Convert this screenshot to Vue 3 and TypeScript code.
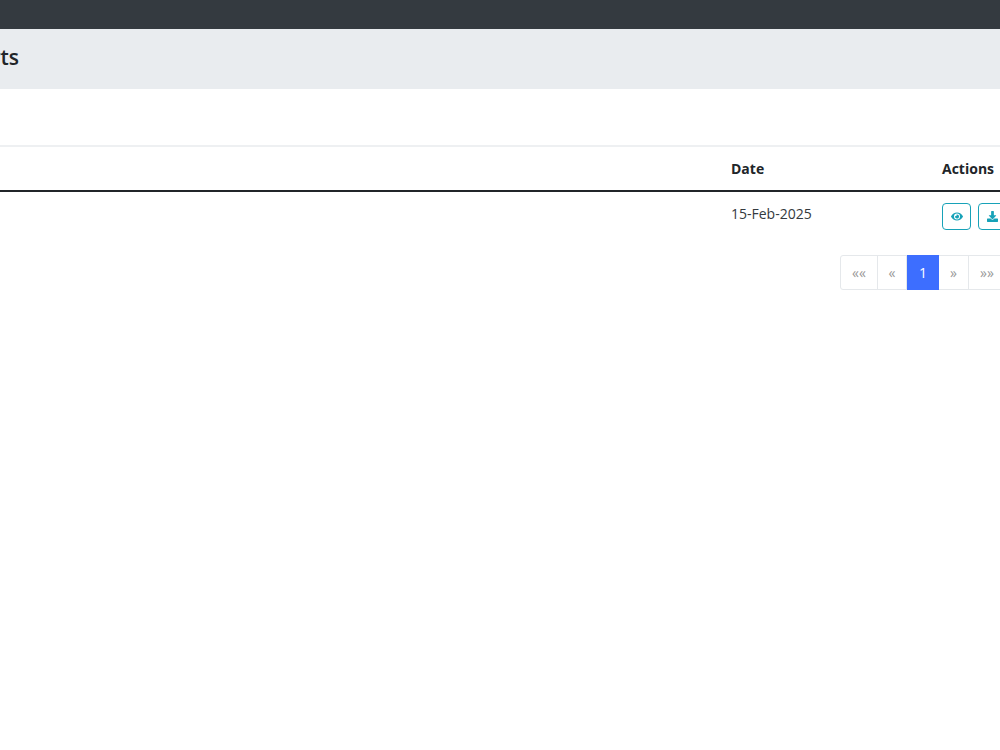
<script setup lang="ts">
const pages: { label: string; active?: boolean; width: number }[] = [
  { label: '««', width: 38 },
  { label: '«', width: 30 },
  { label: '1', active: true, width: 32 },
  { label: '»', width: 30 },
  { label: '»»', width: 38 },
]
</script>

<template>
  <div class="page">
    <div class="topbar"></div>
    <div class="titlebar"><h1 class="title">Reports</h1></div>
    <div class="content">
      <div class="row head">
        <div class="c-date">Date</div>
        <div class="c-act">Actions</div>
      </div>
      <div class="row body">
        <div class="c-date date-text">15-Feb-2025</div>
        <div class="c-act btns">
          <button class="btn" aria-label="View">
            <svg class="eye" viewBox="0 0 576 512"><path fill="currentColor" d="M572.52 241.4C518.29 135.59 410.93 64 288 64S57.68 135.64 3.48 241.41a32.35 32.35 0 0 0 0 29.19C57.71 376.41 165.07 448 288 448s230.32-71.64 284.52-177.41a32.35 32.35 0 0 0 0-29.19zM288 400a144 144 0 1 1 144-144 143.93 143.93 0 0 1-144 144zm0-240a95.31 95.31 0 0 0-25.31 3.79 47.85 47.85 0 0 1-66.9 66.9A95.78 95.78 0 1 0 288 160z"/></svg>
          </button>
          <button class="btn" aria-label="Download">
            <svg class="dl" viewBox="0 0 512 512"><path fill="currentColor" d="M216 0h80c13.3 0 24 10.7 24 24v168h87.7c17.8 0 26.7 21.5 14.1 34.1L269.7 378.3c-7.5 7.5-19.8 7.5-27.3 0L90.1 226.1c-12.6-12.6-3.7-34.1 14.1-34.1H192V24c0-13.3 10.7-24 24-24zm296 376v112c0 13.3-10.7 24-24 24H24c-13.3 0-24-10.7-24-24V376c0-13.3 10.7-24 24-24h146.7l49 49c20.1 20.1 52.5 20.1 72.6 0l49-49H488c13.3 0 24 10.7 24 24z"/></svg>
          </button>
        </div>
      </div>
      <div class="pager">
        <span
          v-for="p in pages"
          :key="p.label"
          class="pg"
          :class="{ active: p.active }"
          :style="{ width: p.width + 'px' }"
        >{{ p.label }}</span>
      </div>
    </div>
  </div>
</template>

<style scoped>
.page {
  width: 1000px;
  height: 750px;
  overflow: hidden;
  background: #fff;
  font-family: "Open Sans", "Noto Sans", sans-serif;
  color: #212529;
}
.topbar {
  height: 29px;
  background: #343a40;
}
.titlebar {
  height: 60px;
  background: #e9ecef;
  display: flex;
  align-items: center;
  padding-bottom: 4px;
  box-sizing: border-box;
}
.title {
  margin: 0 0 0 -60px;
  font-size: 21px;
  font-weight: 600;
  line-height: 1;
}
.content {
  padding-top: 56px;
  width: 1040px;
}
.row {
  display: flex;
  padding-left: 731px;
}
.head {
  height: 47px;
  box-sizing: border-box;
  border-top: 2px solid #eef0f2;
  border-bottom: 2px solid #212529;
  align-items: center;
  font-weight: 700;
  font-size: 14px;
}
.body {
  height: 63px;
  box-sizing: border-box;
  padding-top: 11px;
  font-size: 14px;
  color: #343a40;
}
.c-date {
  width: 211px;
}
.date-text {
  padding-top: 1px;
}
.btns {
  display: flex;
  gap: 7px;
  align-self: flex-start;
}
.btn {
  width: 29px;
  height: 27px;
  padding: 0;
  box-sizing: border-box;
  border: 1px solid #17a2b8;
  border-radius: 4px;
  background: #fff;
  color: #17a2b8;
  display: flex;
  align-items: center;
  justify-content: center;
}
.eye {
  width: 12px;
  height: 11px;
}
.dl {
  width: 11px;
  height: 11px;
}
.pager {
  display: flex;
  margin-left: 840px;
}
.pg {
  height: 35px;
  box-sizing: border-box;
  border: 1px solid #e5e8eb;
  margin-left: -1px;
  display: flex;
  align-items: center;
  justify-content: center;
  font-size: 14px;
  color: #999;
  background: #fff;
}
.pg:first-child {
  margin-left: 0;
  border-radius: 3px 0 0 3px;
}
.pg.active {
  background: #3d6eff;
  border-color: #3d6eff;
  color: #fff;
  font-size: 14px;
  font-weight: 500;
  margin-left: 0;
}
.pg.active + .pg {
  margin-left: 0;
  border-left: 0;
}
</style>
